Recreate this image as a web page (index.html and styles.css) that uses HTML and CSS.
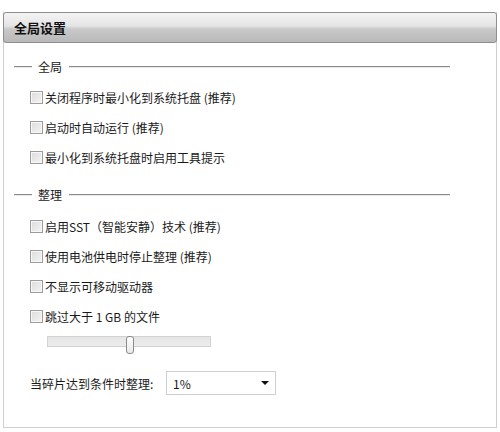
FILE: index.html
```html
<!DOCTYPE html>
<html lang="zh-CN">
<head>
  <meta charset="UTF-8" />
  <title>全局设置</title>
  <link rel="stylesheet" href="styles.css">
</head>
<body>

<div class="panel">
  <div class="panel-head">全局设置</div>

  <div class="panel-body">
    <div class="group-title">
      <span class="rule short"></span>
      <span class="group-name">全局</span>
      <span class="rule"></span>
    </div>
    <label class="check-row"><input type="checkbox">关闭程序时最小化到系统托盘 (推荐)</label>
    <label class="check-row"><input type="checkbox">启动时自动运行 (推荐)</label>
    <label class="check-row"><input type="checkbox">最小化到系统托盘时启用工具提示</label>

    <div class="group-title second">
      <span class="rule short"></span>
      <span class="group-name">整理</span>
      <span class="rule"></span>
    </div>
    <label class="check-row"><input type="checkbox">启用SST（智能安静）技术 (推荐)</label>
    <label class="check-row"><input type="checkbox">使用电池供电时停止整理 (推荐)</label>
    <label class="check-row"><input type="checkbox">不显示可移动驱动器</label>
    <label class="check-row"><input type="checkbox">跳过大于 1 GB 的文件</label>

    <div class="slider">
      <div class="slider-track"></div>
      <div class="slider-thumb"></div>
    </div>

    <div class="select-row">
      <span class="select-label">当碎片达到条件时整理:</span>
      <div class="select-box">
        <span>1%</span>
        <span class="arrow"></span>
      </div>
    </div>
  </div>
</div>

</body>
</html>
```

FILE: styles.css
```css
* {
  box-sizing: border-box;
}

body {
  margin: 0;
  background: #fff;
  font-family: "Noto Sans CJK SC", "DejaVu Sans", sans-serif;
  font-size: 12px;
  color: #1a1a1a;
}

.panel {
  margin: 12px 3px 0 3px;
  height: 416px;
  border: 1px solid #cfcfcf;
  border-top: none;
  background: #fff;
}

.panel-head {
  height: 31px;
  margin: 0 -1px;
  padding-left: 10px;
  line-height: 29px;
  font-weight: bold;
  font-size: 13px;
  color: #111;
  border: 1px solid #8e8e8e;
  border-radius: 3px;
  background: linear-gradient(#f4f4f4 0%, #e4e4e4 45%, #c9c9c9 55%, #b9b9b9 100%);
}

.panel-body {
  padding: 0 46px 0 10px;
}

.group-title {
  display: flex;
  align-items: center;
  height: 20px;
  margin-top: 14px;
  margin-bottom: 5px;
}

.group-title.second {
  margin-top: 13px;
  margin-bottom: 6px;
}

.rule {
  flex: 1;
  height: 2px;
  border-top: 1px solid #8a8a8a;
  border-bottom: 1px solid #e8e8e8;
}

.rule.short {
  flex: 0 0 18px;
}

.group-name {
  padding: 0 7px 0 6px;
  line-height: 20px;
}

.check-row {
  display: flex;
  align-items: center;
  height: 30px;
  padding-left: 16px;
  white-space: pre;
}

.check-row input {
  appearance: none;
  -webkit-appearance: none;
  width: 13px;
  height: 13px;
  margin: 0 2px 0 0;
  border: 1px solid #9c9c9c;
  background: linear-gradient(135deg, #dcdcdc, #f4f4f4);
  box-shadow: inset 0 0 0 1px #f8f8f8;
}

.slider {
  position: relative;
  width: 164px;
  height: 18px;
  margin: 0 0 17px 33px;
}

.slider-track {
  margin-top: 5px;
  height: 11px;
  border: 1px solid #d2d2d2;
  background: linear-gradient(#e6e6e6, #ececec);
}

.slider-thumb {
  position: absolute;
  left: 79px;
  top: 0;
  width: 8px;
  height: 18px;
  border: 1px solid #8c8c8c;
  border-radius: 3px;
  background: linear-gradient(#ffffff, #e8e8e8);
}

.select-row {
  display: flex;
  align-items: center;
  padding-left: 16px;
}

.select-label {
  width: 136px;
}

.select-box {
  display: flex;
  align-items: center;
  justify-content: space-between;
  width: 110px;
  height: 24px;
  padding: 0 6px;
  border: 1px solid #cfcfcf;
  background: #fff;
}

.arrow {
  width: 0;
  height: 0;
  border-left: 4px solid transparent;
  border-right: 4px solid transparent;
  border-top: 4px solid #111;
}
```
